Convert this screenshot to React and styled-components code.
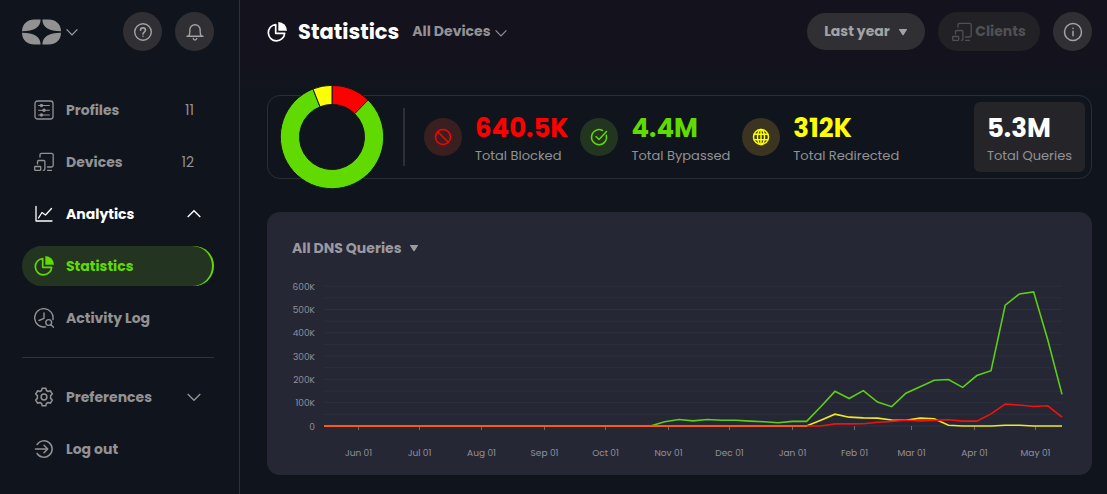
import styled, { createGlobalStyle } from "styled-components";

const GlobalStyle = createGlobalStyle`
  * {
    box-sizing: border-box;
  }

  body {
    margin: 0;
    background-color: #10151d;
    color: #929294;
    font-family: Poppins, Inter, "Open Sans", sans-serif;
    font-size: 14px;
  }

  button {
    font: inherit;
    color: inherit;
    background: none;
    border: none;
    padding: 0;
    cursor: pointer;
  }

  a {
    color: inherit;
    text-decoration: none;
  }

  svg {
    display: block;
    flex: none;
  }
`;

const Page = styled.div`
  display: flex;
  min-height: 100vh;
`;

const Sidebar = styled.aside`
  flex: none;
  width: 240px;
  padding: 12px 25px 0 22px;
  border-right: 1px solid #303239;
`;

const SidebarTop = styled.div`
  display: flex;
  align-items: center;
  gap: 13px;
  height: 39px;
  margin-bottom: 39px;
`;

const LogoButton = styled.button`
  display: flex;
  align-items: center;
  gap: 5px;
  margin-right: auto;
  color: #a3a3a5;
`;

const RoundButton = styled.button`
  display: flex;
  align-items: center;
  justify-content: center;
  flex: none;
  width: 39px;
  height: 39px;
  border-radius: 50%;
  background-color: #303034;
  color: #a3a3a5;
`;

const Nav = styled.nav`
  display: flex;
  flex-direction: column;
  gap: 12px;
`;

const NavItem = styled.a`
  display: flex;
  align-items: center;
  gap: 12px;
  height: 40px;
  padding: 0 13px 0 12px;
  border-radius: 20px;
  font-weight: 700;
  color: ${(props) => props.$color || "#929294"};
  background-color: ${(props) => (props.$active ? "#233420" : "transparent")};
  box-shadow: ${(props) => (props.$active ? "inset -2px 0 #60da00" : "none")};
`;

const NavEnd = styled.span`
  margin-left: auto;
  padding-right: ${(props) => (props.$icon ? 0 : "7px")};
  font-weight: 400;
`;

const Divider = styled.hr`
  width: 100%;
  height: 1px;
  margin: 7px 0;
  border: none;
  background-color: #343235;
`;

const Main = styled.main`
  flex: 1;
  min-width: 0;
  background: linear-gradient(#14121c, #14121c 60px, #10151d 90px);
  padding: 12px 15px 19px 27px;
`;

const Header = styled.header`
  display: flex;
  align-items: center;
  gap: 13px;
  height: 39px;
  margin-bottom: 44px;
`;

const Heading = styled.div`
  display: flex;
  align-items: center;
  gap: 11px;
  color: #fff;
`;

const Title = styled.h1`
  margin: 0;
  font-size: 21px;
  font-weight: 700;
`;

const DeviceSelect = styled.button`
  display: flex;
  align-items: center;
  gap: 5px;
  margin-right: auto;
  font-weight: 700;

  svg {
    margin-top: 3px;
  }
`;

const Pill = styled.button`
  display: flex;
  align-items: center;
  justify-content: center;
  gap: ${(props) => props.$gap};
  width: ${(props) => props.$width};
  height: ${(props) => props.$height};
  border-radius: 20px;
  font-weight: 700;
  color: #a3a3a5;
  background-color: #303034;

  &:disabled {
    color: #505053;
    background-color: #222226;
  }
`;

const Summary = styled.section`
  display: flex;
  align-items: center;
  height: 84px;
  padding: 0 6px 0 12px;
  border: 1px solid #2c2e35;
  border-radius: 13px;
`;

const Rule = styled.div`
  width: 2px;
  height: 58px;
  margin: 0 19px;
  background-color: #2f3037;
`;

const Stats = styled.div`
  display: flex;
  gap: 12px;
  margin-right: auto;
`;

const Stat = styled.div`
  display: flex;
  align-items: center;
  gap: 13px;
`;

const StatIcon = styled.div`
  display: flex;
  align-items: center;
  justify-content: center;
  width: 38px;
  height: 38px;
  border-radius: 50%;
  color: ${(props) => props.$color};
  background-color: ${(props) => props.$background};
`;

const StatText = styled.div`
  padding-top: 4px;
`;

const StatValue = styled.div`
  font-size: 26px;
  line-height: 34px;
  font-weight: 700;
  color: ${(props) => props.$color};
`;

const StatLabel = styled.div`
  font-size: 13px;
  line-height: 22px;
  white-space: nowrap;
`;

const Total = styled.div`
  height: 70px;
  padding: 5px 13px;
  border-radius: 6px;
  background-color: #252529;
`;

const ChartCard = styled.section`
  margin-top: 33px;
  padding: 24px 25px 12px;
  border-radius: 13px;
  background-color: #262735;
`;

const ChartSelect = styled.button`
  display: flex;
  align-items: center;
  gap: 8px;
  height: 24px;
  margin-bottom: 14px;
  font-weight: 700;
  color: #9b99a0;
`;

const ChartSvg = styled.svg`
  width: 100%;
  height: auto;

  text {
    font-size: 9px;
    fill: #92919a;
  }

  polyline {
    fill: none;
    stroke-width: 1.6;
  }
`;

const Icon = ({ size = 20, children, ...rest }) => (
  <svg
    width={size}
    height={size}
    viewBox="0 0 20 20"
    fill="none"
    stroke="currentColor"
    strokeWidth="1.3"
    strokeLinecap="round"
    strokeLinejoin="round"
    aria-hidden="true"
    {...rest}
  >
    {children}
  </svg>
);

const Chevron = ({ size = 14, up }) => (
  <svg width={size} height={size} viewBox="0 0 14 14" fill="none" stroke="currentColor" strokeWidth="1.4" aria-hidden="true">
    <path d={up ? "M.7 10 7 3.7 13.3 10" : "M.7 4 7 10.3 13.3 4"} />
  </svg>
);

const Caret = () => (
  <svg width="10" height="8" viewBox="0 0 10 8" fill="currentColor" aria-hidden="true">
    <path d="M1.5 1h7c.5 0 .7.4.4.8L5.6 6.9c-.3.5-.9.5-1.2 0L1.1 1.8C.8 1.4 1 1 1.5 1Z" />
  </svg>
);

const Logo = () => (
  <svg width="39" height="26" viewBox="0 0 39 26" fill="#929294" aria-hidden="true">
    <path d="M18.6.5C18.6 8 12.500 12.300 0 12.300 0 5 5.500.5 12.500.5ZM20.400.5C20.400 8 26.500 12.300 39 12.300 39 5 33.500.5 26.500.5ZM18.600 25.500C18.600 18 12.500 13.700 0 13.700 0 21 5.500 25.500 12.500 25.500ZM20.400 25.500C20.400 18 26.500 13.700 39 13.700 39 21 33.500 25.500 26.500 25.500Z" />
  </svg>
);

const ProfilesIcon = () => (
  <Icon>
    <rect x="1" y="1" width="18" height="18" rx="2.500" />
    <path d="M4.500 5.500h11M4.500 10.300h11M4.500 15h11" strokeWidth="1" />
    <g fill="currentColor" stroke="none">
      <circle cx="7.500" cy="5.500" r="1.700" />
      <circle cx="10" cy="10.300" r="1.700" />
      <circle cx="7.500" cy="15" r="1.700" />
    </g>
  </Icon>
);

const DevicesIcon = () => (
  <Icon strokeWidth="1.300">
    <path d="M6 5V3C6 1.800 6.500 1.300 7.700 1.300h9.800c1.200 0 1.700.5 1.700 1.700v10.300c0 1.200-.5 1.700-1.700 1.700h-4" />
    <path d="M3.500 12V9.700c0-.8.4-1.200 1.200-1.200h5c.8 0 1.200.4 1.200 1.200v7c0 1-.6 1.600-1.600 1.600M13.500 18.300h4" />
    <rect x=".7" y="14.500" width="6" height="3.800" rx=".5" />
  </Icon>
);

const AnalyticsIcon = () => (
  <Icon>
    <path d="M2 2.500V17h16" />
    <path d="M4.500 14 8 8.500l3.500 2.500L17.500 4.500" />
  </Icon>
);

const PieIcon = () => (
  <Icon strokeWidth="1.700">
    <path d="M8.700 2.500A8.200 8.200 0 1 0 17.700 11.300H8.700Z" />
    <path d="M11.300 0A8.800 8.800 0 0 1 20 8.700H11.300Z" fill="currentColor" stroke="none" />
  </Icon>
);

const ActivityIcon = () => (
  <Icon strokeWidth="1.400">
    <path d="M11.500 18.900A9.200 9.200 0 1 1 18.900 11.500M10 5v5.300L5 12.500" />
    <circle cx="14.700" cy="14.500" r="2.900" />
    <path d="m16.900 16.700 2.600 2.600" />
  </Icon>
);

const GearIcon = () => (
  <Icon strokeWidth="1.500">
    <path d="M8.200 1.300h3.600l.6 2.200 1.700 1 2.300-.7 1.900 3.200-1.700 1.600v2.800l1.700 1.600-1.900 3.200-2.300-.7-1.700 1-.6 2.200H8.200l-.6-2.200-1.700-1-2.300.7L1.700 13l1.700-1.600V8.600L1.700 7l1.900-3.200 2.300.7 1.700-1Z" />
    <circle cx="10" cy="10" r="2.900" />
  </Icon>
);

const LogoutIcon = () => (
  <Icon strokeWidth="1.500">
    <path d="M3.100 5.500a8.200 8.200 0 1 1 0 9M1.500 10h12M10 6.300l3.700 3.700-3.700 3.700" />
  </Icon>
);

const HelpIcon = () => (
  <Icon strokeWidth="1.400">
    <circle cx="10" cy="10" r="8.300" />
    <path d="M7.500 8.200C7.500 6.700 8.500 5.900 10 5.900s2.500.9 2.500 2.200c0 1.900-2.500 2-2.500 4M10 14.200v.1" strokeWidth="1.600" />
  </Icon>
);

const BellIcon = () => (
  <Icon strokeWidth="1.400">
    <path d="M2 14.200h16M3.500 14.200c1-1 1.300-2.200 1.300-4.200V8a5.200 5.200 0 0 1 10.400 0v2c0 2 .3 3.200 1.300 4.200M8.300 16.500c.2 2 3.200 2 3.400 0" />
  </Icon>
);

const InfoIcon = () => (
  <Icon>
    <circle cx="10" cy="10" r="8.500" strokeWidth="1.500" />
    <path d="M10 9.300v4.500M10 6.300v.2" strokeWidth="1.500" />
  </Icon>
);

const BlockIcon = () => (
  <Icon>
    <circle cx="10" cy="10" r="7.500" strokeWidth="1.500" />
    <path d="m4.700 4.700 10.600 10.600" strokeWidth="1.500" />
  </Icon>
);

const CheckIcon = () => (
  <Icon strokeWidth="1.500">
    <path d="M17.300 8.300A7.500 7.500 0 1 1 13.500 3.500M7 9.500l3 3 7.500-8" />
  </Icon>
);

const GlobeIcon = () => (
  <Icon strokeWidth="1.500">
    <circle cx="10" cy="10" r="7.500" />
    <ellipse cx="10" cy="10" rx="3.500" ry="7.500" />
    <path d="M10 2.500v15M3.300 7.200h13.400M3.300 12.800h13.400" />
  </Icon>
);

const slices = [
  { value: 12.3, color: "#ff0000" },
  { value: 81.7, color: "#60da00" },
  { value: 6, color: "#ffff00" },
];

const Donut = () => {
  let start = 0;
  return (
    <svg width="104" height="104" viewBox="0 0 104 104" role="img" aria-label="Query share">
      {slices.map(({ value, color }) => {
        const point = (share, r) => {
          const angle = (share / 100) * 2 * Math.PI;
          return `${52 + r * Math.sin(angle)} ${52 - r * Math.cos(angle)}`;
        };
        const end = start + value;
        const large = value > 50 ? 1 : 0;
        const d = `M${point(start, 51.7)}A51.7 51.7 0 ${large} 1 ${point(end, 51.7)}L${point(end, 32.5)}A32.5 32.5 0 ${large} 0 ${point(start, 32.5)}Z`;
        start = end;
        return <path key={color} d={d} fill={color} stroke="#10151d" strokeWidth="1" />;
      })}
    </svg>
  );
};

const stats = [
  { value: "640.5K", label: "Total Blocked", color: "#ff0000", background: "#3a1f20", icon: <BlockIcon /> },
  { value: "4.4M", label: "Total Bypassed", color: "#60da00", background: "#233420", icon: <CheckIcon /> },
  { value: "312K", label: "Total Redirected", color: "#ffff00", background: "#3a3420", icon: <GlobeIcon /> },
];

const months = [
  ["Jun 01", 67],
  ["Jul 01", 128],
  ["Aug 01", 190],
  ["Sep 01", 253],
  ["Oct 01", 314],
  ["Nov 01", 377],
  ["Dec 01", 438],
  ["Jan 01", 501],
  ["Feb 01", 563],
  ["Mar 01", 620],
  ["Apr 01", 683],
  ["May 01", 744],
];

// weekly totals in thousands, the weeks before these are all zero
const bypassed = [0, 18, 28, 22, 28, 25, 25, 21, 18, 14, 20, 20, 83, 149, 118, 152, 103, 83, 141, 169, 197, 200, 166, 217, 238, 520, 568, 577, 370, 136];
const redirected = [0, 0, 0, 0, 0, 0, 0, 0, 0, 0, 0, 0, 25, 51, 38, 35, 34, 26, 25, 34, 31, 3, 0, 0, 0, 3, 3, 0, 0, 0];
const blocked = [0, 0, 0, 0, 0, 0, 0, 0, 0, 0, 0, 0, 0, 9, 9, 10, 16, 20, 25, 22, 24, 27, 21, 21, 52, 94, 90, 84, 87, 38];

const toPoints = (values) => {
  const last = values.length - 1;
  const points = values.map((v, i) => `${770 - (last - i) * 14.19},${152 - v * 0.2325}`);
  return ["32,152", ...points].join(" ");
};

const QueryChart = () => (
  <ChartSvg viewBox="0 0 775 189" role="img" aria-label="All DNS Queries">
    {Array.from({ length: 13 }, (_, i) => (
      <path key={i} d={`M32 ${152 - i * 11.65}H770`} stroke="#2e2f3c" />
    ))}
    {[0, 100, 200, 300, 400, 500, 600].map((v) => (
      <text key={v} x="23" y={155.5 - v * 0.233} textAnchor="end">
        {v ? `${v}K` : "0"}
      </text>
    ))}
    {months.map(([label, x]) => (
      <g key={label}>
        <path d={`M${x - 0.5} 152v4`} stroke="#6b6b74" />
        <text x={x - 0.5} y="182" textAnchor="middle">
          {label}
        </text>
      </g>
    ))}
    <polyline points={toPoints(bypassed)} stroke="#5dcf14" />
    <polyline points={toPoints(redirected)} stroke="#f0ea1c" />
    <polyline points={toPoints(blocked)} stroke="#f2120c" />
    <path d="M32 152H515" stroke="#ff5a0c" strokeWidth="2" />
  </ChartSvg>
);

function App() {
  return (
    <>
      <GlobalStyle />
      <Page>
        <Sidebar>
          <SidebarTop>
            <LogoButton aria-label="Account">
              <Logo />
              <Chevron size={12} />
            </LogoButton>
            <RoundButton aria-label="Help">
              <HelpIcon />
            </RoundButton>
            <RoundButton aria-label="Notifications">
              <BellIcon />
            </RoundButton>
          </SidebarTop>
          <Nav>
            <NavItem href="#profiles">
              <ProfilesIcon />
              Profiles
              <NavEnd>11</NavEnd>
            </NavItem>
            <NavItem href="#devices">
              <DevicesIcon />
              Devices
              <NavEnd>12</NavEnd>
            </NavItem>
            <NavItem href="#analytics" $color="#fff">
              <AnalyticsIcon />
              Analytics
              <NavEnd $icon>
                <Chevron up />
              </NavEnd>
            </NavItem>
            <NavItem href="#statistics" $color="#60da00" $active>
              <PieIcon />
              Statistics
            </NavItem>
            <NavItem href="#activity">
              <ActivityIcon />
              Activity Log
            </NavItem>
            <Divider />
            <NavItem href="#preferences">
              <GearIcon />
              Preferences
              <NavEnd $icon>
                <Chevron />
              </NavEnd>
            </NavItem>
            <NavItem href="#logout">
              <LogoutIcon />
              Log out
            </NavItem>
          </Nav>
        </Sidebar>
        <Main>
          <Header>
            <Heading>
              <PieIcon />
              <Title>Statistics</Title>
            </Heading>
            <DeviceSelect>
              All Devices
              <Chevron size={12} />
            </DeviceSelect>
            <Pill $width="118px" $height="37px" $gap="8px">
              Last year
              <Caret />
            </Pill>
            <Pill $width="102px" $height="39px" $gap="3px" disabled>
              <DevicesIcon />
              Clients
            </Pill>
            <RoundButton aria-label="Info">
              <InfoIcon />
            </RoundButton>
          </Header>
          <Summary>
            <Donut />
            <Rule />
            <Stats>
              {stats.map(({ value, label, color, background, icon }) => (
                <Stat key={label}>
                  <StatIcon $color={color} $background={background}>
                    {icon}
                  </StatIcon>
                  <StatText>
                    <StatValue $color={color}>{value}</StatValue>
                    <StatLabel>{label}</StatLabel>
                  </StatText>
                </Stat>
              ))}
            </Stats>
            <Total>
              <StatText>
                <StatValue $color="#fff">5.3M</StatValue>
                <StatLabel>Total Queries</StatLabel>
              </StatText>
            </Total>
          </Summary>
          <ChartCard>
            <ChartSelect>
              All DNS Queries
              <Caret />
            </ChartSelect>
            <QueryChart />
          </ChartCard>
        </Main>
      </Page>
    </>
  );
}

export default App;
